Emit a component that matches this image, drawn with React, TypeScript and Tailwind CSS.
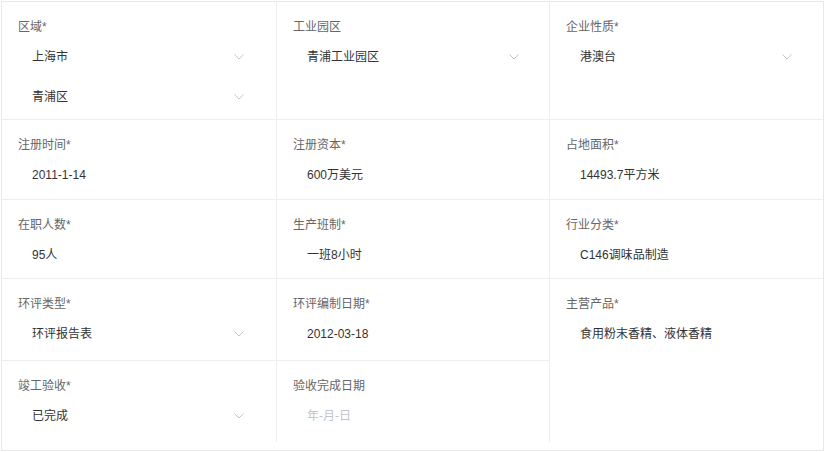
import React from "react";

const FONT = { fontFamily: '"Liberation Sans", "Noto Sans CJK SC", Arial, sans-serif' };

function Chevron() {
  return (
    <svg width="10" height="6" viewBox="0 0 10 6" className="shrink-0">
      <polyline points="0.5,0.5 5,5 9.5,0.5" fill="none" stroke="#c0c4cc" strokeWidth="1" />
    </svg>
  );
}

function Label({ children }: { children: React.ReactNode }) {
  return <div className="ml-[16px] h-[18px] text-[12px] leading-[18px] text-[#666666]">{children}</div>;
}

function Value({ children, select, placeholder }: { children: React.ReactNode; select?: boolean; placeholder?: boolean }) {
  return (
    <div className="ml-[16px] flex h-[32px] w-[226px] items-center justify-between pl-[14px]">
      <span className={`text-[12px] leading-[32px] ${placeholder ? "text-[#c0c4cc]" : "text-[#333333]"}`}>{children}</span>
      {select ? <Chevron /> : null}
    </div>
  );
}

function Cell({
  label,
  children,
  h,
  right = true,
  bottom = true,
  className = "",
}: {
  label: string;
  children: React.ReactNode;
  h: string;
  right?: boolean;
  bottom?: boolean;
  className?: string;
}) {
  return (
    <div
      className={`${h} pt-[16px] border-[#eeeeee] ${right ? "border-r" : ""} ${bottom ? "border-b" : ""} ${className}`}
    >
      <Label>{label}</Label>
      <div className="mt-[5px] flex flex-col gap-[8px]">{children}</div>
    </div>
  );
}

export default function App() {
  return (
    <div className="bg-white pl-[1px] pt-[1px]" style={FONT}>
      <div className="w-[823px] border border-[#e8e8e8] pb-[8px] bg-white">
        <div className="grid grid-cols-[275px_273px_273px]">
          {/* Row 1 */}
          <Cell label="区域*" h="h-[118px]">
            <Value select>上海市</Value>
            <Value select>青浦区</Value>
          </Cell>
          <Cell label="工业园区" h="h-[118px]">
            <Value select>青浦工业园区</Value>
          </Cell>
          <Cell label="企业性质*" h="h-[118px]" right={false}>
            <Value select>港澳台</Value>
          </Cell>

          {/* Row 2 */}
          <Cell label="注册时间*" h="h-[80px]">
            <Value>2011-1-14</Value>
          </Cell>
          <Cell label="注册资本*" h="h-[80px]">
            <Value>600万美元</Value>
          </Cell>
          <Cell label="占地面积*" h="h-[80px]" right={false}>
            <Value>14493.7平方米</Value>
          </Cell>

          {/* Row 3 */}
          <Cell label="在职人数*" h="h-[79px]">
            <Value>95人</Value>
          </Cell>
          <Cell label="生产班制*" h="h-[79px]">
            <Value>一班8小时</Value>
          </Cell>
          <Cell label="行业分类*" h="h-[79px]" right={false}>
            <Value>C146调味品制造</Value>
          </Cell>

          {/* Row 4 */}
          <Cell label="环评类型*" h="h-[82px]">
            <Value select>环评报告表</Value>
          </Cell>
          <Cell label="环评编制日期*" h="h-[82px]">
            <Value>2012-03-18</Value>
          </Cell>
          <Cell label="主营产品*" h="h-[163px]" right={false} bottom={false} className="row-span-2">
            <Value>食用粉末香精、液体香精</Value>
          </Cell>

          {/* Row 5 */}
          <Cell label="竣工验收*" h="h-[81px]" bottom={false}>
            <Value select>已完成</Value>
          </Cell>
          <Cell label="验收完成日期" h="h-[81px]" bottom={false}>
            <Value placeholder>年-月-日</Value>
          </Cell>
        </div>
      </div>
    </div>
  );
}
